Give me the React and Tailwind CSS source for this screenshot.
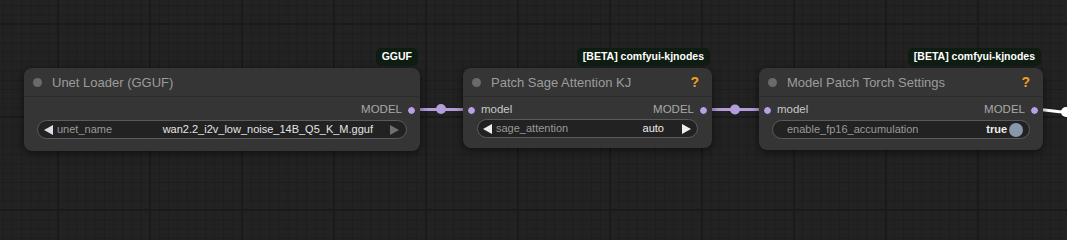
import React from "react";

const font = "font-['Liberation_Sans',Arial,sans-serif]";

function Badge({ text }) {
  return (
    <div className="absolute right-[2px] bottom-[calc(100%+2px)] flex h-[18px] items-center rounded-[5px] bg-[#0f1c12] px-[6px] text-[10.5px] font-bold text-white">
      {text}
    </div>
  );
}

function Slot() {
  return <span className="h-[9px] w-[9px] rounded-full border border-[#222] bg-[#b7a1e0]" />;
}

function Arrow({ dir, color }) {
  return (
    <svg width="9" height="10" viewBox="0 0 9 10" className="shrink-0">
      {dir === "left" ? (
        <polygon points="9,0 9,10 0,5" fill={color} />
      ) : (
        <polygon points="0,0 0,10 9,5" fill={color} />
      )}
    </svg>
  );
}

function Node({ className, title, help, badge, input, children }) {
  return (
    <div
      className={
        "absolute flex flex-col rounded-[8px] bg-[#353535] shadow-[0_2px_8px_rgba(0,0,0,0.55)] " +
        className
      }
    >
      {badge && <Badge text={badge} />}
      <div className="flex h-[29px] items-center border-b border-[#2c2c2c] pt-[1px] pr-[13px] pl-[9px]">
        <span className="mr-[10px] h-[9px] w-[9px] rounded-full bg-[#6a6a6a]" />
        <span className="flex-1 text-[13px] text-[#9c9c9c]">{title}</span>
        {help && <span className="text-[14px] font-bold text-[#f0a020]">?</span>}
      </div>
      <div className="mt-[6px] flex h-[14px] items-center px-[4px] text-[11.5px]">
        {input ? (
          <div className="flex items-center gap-[5px]">
            <Slot />
            <span className="text-[#c8c8c8]">model</span>
          </div>
        ) : null}
        <div className="ml-auto flex items-center gap-[5px]">
          <span className="text-[#a8a8a8]">MODEL</span>
          <Slot />
        </div>
      </div>
      {children}
    </div>
  );
}

export default function App() {
  return (
    <div className={"relative h-[240px] w-[1067px] overflow-hidden bg-[#222222] " + font}>
      {/* canvas grid */}
      <div className="absolute inset-0 bg-[linear-gradient(to_right,#1d1d1d_1px,transparent_1px),linear-gradient(to_bottom,#1d1d1d_1px,transparent_1px)] bg-[length:9.2px_9.3px] bg-[position:2.8px_5.4px]" />
      <div className="absolute inset-0 bg-[linear-gradient(to_right,#1a1a1a_2px,transparent_2px),linear-gradient(to_bottom,#1a1a1a_2px,transparent_2px)] bg-[length:92px_93px] bg-[position:57px_23px]" />

      {/* links */}
      <svg className="absolute inset-0" width="1067" height="240">
        <line x1="412" y1="109.5" x2="471" y2="109.5" stroke="#b39ddb" strokeWidth="3" />
        <circle cx="441" cy="109" r="5" fill="#b39ddb" />
        <line x1="703" y1="109.5" x2="768" y2="109.5" stroke="#b39ddb" strokeWidth="3" />
        <circle cx="735" cy="109.5" r="5" fill="#b39ddb" />
        <path d="M1034 109.5 C1050 109.5 1052 112 1067 112" stroke="#ffffff" strokeWidth="3" fill="none" />
        <circle cx="1066" cy="112" r="5" fill="#ffffff" />
      </svg>

      <Node className="top-[68px] left-[24px] h-[83px] w-[396px]" title="Unet Loader (GGUF)" badge="GGUF">
        <div className="mx-[13px] mt-[3px] flex h-[19px] items-center rounded-full border border-[#5a5a5a] bg-[#222222] pr-[7px] pl-[6px] text-[11px]">
          <Arrow dir="left" color="#dddddd" />
          <span className="ml-[4px] text-[#999999]">unet_name</span>
          <span className="ml-auto text-[#e4e4e4]">wan2.2_i2v_low_noise_14B_Q5_K_M.gguf</span>
          <span className="ml-[17px]">
            <Arrow dir="right" color="#6f6f6f" />
          </span>
        </div>
      </Node>

      <Node
        className="top-[68px] left-[463px] h-[80px] w-[249px]"
        title="Patch Sage Attention KJ"
        help
        input
        badge="[BETA] comfyui-kjnodes"
      >
        <div className="mx-[14px] mt-[2px] flex h-[19px] items-center rounded-full border border-[#5a5a5a] bg-[#222222] pr-[6px] pl-[5px] text-[11px]">
          <Arrow dir="left" color="#eeeeee" />
          <span className="ml-[4px] text-[#999999]">sage_attention</span>
          <span className="ml-auto text-[#eeeeee]">auto</span>
          <span className="ml-[18px]">
            <Arrow dir="right" color="#eeeeee" />
          </span>
        </div>
      </Node>

      <Node
        className="top-[68px] left-[759px] h-[82px] w-[284px]"
        title="Model Patch Torch Settings"
        help
        input
        badge="[BETA] comfyui-kjnodes"
      >
        <div className="mx-[13px] mt-[3px] flex h-[19px] items-center rounded-full border border-[#5a5a5a] bg-[#222222] pr-[6px] pl-[14px] text-[11px]">
          <span className="text-[#999999]">enable_fp16_accumulation</span>
          <span className="ml-auto font-bold text-[#eeeeee]">true</span>
          <span className="ml-[2px] h-[14px] w-[14px] rounded-full bg-[#8798ad]" />
        </div>
      </Node>
    </div>
  );
}
